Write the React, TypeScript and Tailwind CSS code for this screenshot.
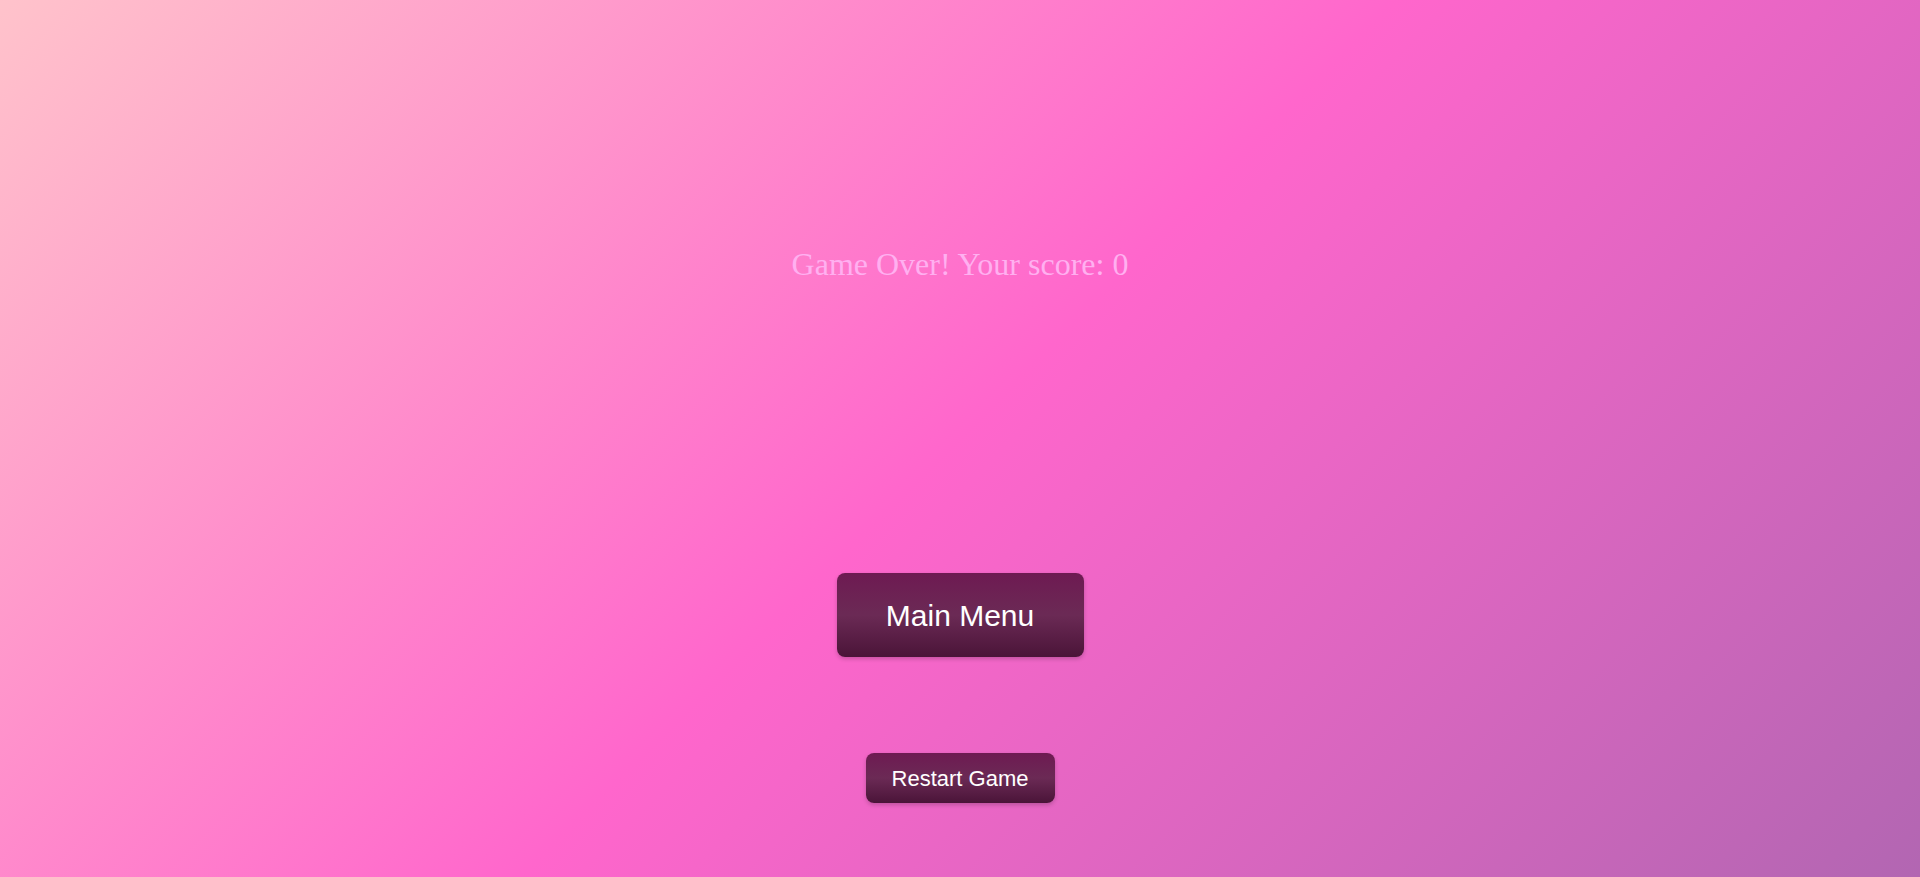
export default function App() {
  return (
    <div className="min-h-screen w-full flex flex-col items-center bg-[linear-gradient(135deg,#ffc3cb_0%,#ff66cc_50%,#b266b2_100%)] font-['Liberation_Sans',Arial,sans-serif]">
      <h1 className="mt-[246px] text-[32px] leading-[37px] text-[#ffb0f0] font-['Liberation_Serif','Times_New_Roman',serif] font-normal">
        Game Over! Your score: 0
      </h1>

      <button className="mt-[290px] w-[247px] h-[84px] rounded-lg text-[30px] text-white bg-[linear-gradient(to_bottom,#6e1a52_0%,#6b2a55_50%,#4a1438_100%)] shadow-[0_2px_4px_rgba(0,0,0,0.2)]">
        Main Menu
      </button>

      <button className="mt-[96px] w-[189px] h-[50px] rounded-lg text-[22px] text-white bg-[linear-gradient(to_bottom,#6e1a52_0%,#6b2a55_50%,#4a1438_100%)] shadow-[0_2px_4px_rgba(0,0,0,0.2)]">
        Restart Game
      </button>
    </div>
  );
}
